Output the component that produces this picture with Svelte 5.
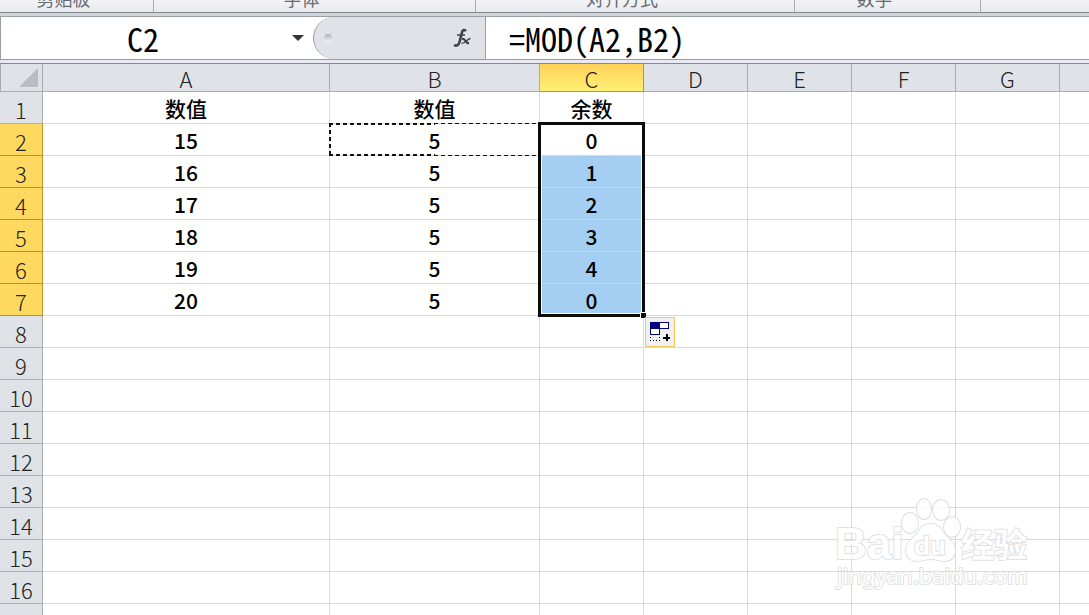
<script lang="ts">
  type Column = { name: string; width: string };

  const groups = [
    { label: '剪贴板', size: 'small' },
    { label: '字体', size: 'large' },
    { label: '对齐方式', size: 'wide' },
    { label: '数字', size: 'medium' },
    { label: '', size: 'rest' },
  ];

  const columns: Column[] = [
    { name: 'A', width: '287px' },
    { name: 'B', width: '210px' },
    { name: 'C', width: '104px' },
    { name: 'D', width: '104px' },
    { name: 'E', width: '104px' },
    { name: 'F', width: '104px' },
    { name: 'G', width: '104px' },
    { name: '', width: 'auto' },
  ];

  const data = [
    ['数值', '数值', '余数'],
    ['15', '5', '0'],
    ['16', '5', '1'],
    ['17', '5', '2'],
    ['18', '5', '3'],
    ['19', '5', '4'],
    ['20', '5', '0'],
  ];

  const rows = Array.from({ length: 16 }, (_, i) => i + 1);

  let cellName = $state('C2');
  let formula = $state('=MOD(A2,B2)');

  function inSelection(row: number) {
    return row >= 2 && row <= 7;
  }
</script>

<div class="app">
  <div class="ribbon">
    {#each groups as group}
      <div class="group {group.size}">{group.label}</div>
    {/each}
  </div>

  <div class="formula-bar">
    <div class="name-box">
      <input class="name-input" aria-label="Name box" bind:value={cellName} />
      <button class="drop" aria-label="Show names">
        <svg width="12" height="6" viewBox="0 0 12 6"><path d="M0 0h12L6 6z" fill="#333" /></svg>
      </button>
    </div>
    <div class="functions">
      <span class="grip"></span>
      <button class="fx" aria-label="Insert function">
        <svg width="20" height="22" viewBox="0 0 20 22" fill="none" stroke="#3f4246">
          <path d="M14 4C12 2 10.500 3 9.800 6L7.500 15C6.800 18 4.500 19.500 2 18" stroke-width="2.600" />
          <path d="M5 8h8" stroke-width="1.500" />
          <path d="M10 12c4-1 3 5 7 4" stroke-width="2.400" />
          <path d="M18.500 11.500c-3 0-5 5-9 5" stroke-width="1.300" />
        </svg>
      </button>
    </div>
    <input class="formula" aria-label="Formula bar" bind:value={formula} />
  </div>

  <div class="sheet">
    <table>
      <colgroup>
        <col style:width="43px" />
        {#each columns as column}
          <col style:width={column.width} />
        {/each}
      </colgroup>
      <thead>
        <tr>
          <th class="corner" aria-label="Select all">
            <svg width="20" height="20" viewBox="0 0 20 20"><path d="M19 0v19H0z" fill="#b9bdc1" /></svg>
          </th>
          {#each columns as column}
            <th scope="col" class:active={column.name === 'C'}>{column.name}</th>
          {/each}
        </tr>
      </thead>
      <tbody>
        {#each rows as row}
          <tr>
            <th scope="row" class:active={inSelection(row)}>{row}</th>
            {#each columns as column, c}
              <td class:filled={column.name === 'C' && row > 2 && row <= 7}>
                {data[row - 1]?.[c] ?? ''}
                {#if column.name === 'B' && row === 2}
                  <span class="ants"></span>
                {/if}
                {#if column.name === 'C' && row === 2}
                  <span class="selection">
                    <span class="handle"></span>
                    <button class="autofill" aria-label="Auto fill options">
                      <svg width="20" height="20" viewBox="0 0 20 20" shape-rendering="crispEdges">
                        <path d="M0 0h19v7h-9v6H0z" fill="#00007f" />
                        <path d="M10 1h8v5h-8zM1 7h8v5H1z" fill="#fff" />
                        <path
                          d="M0 15h1v1H0zM0 18h1v1H0zM3 18h1v1H3zM6 18h1v1H6zM9 18h1v1H9zM9 15h1v1H9zM13 15h7v2h-7zM16 12h2v7h-2z"
                          fill="#000"
                        />
                      </svg>
                    </button>
                  </span>
                {/if}
              </td>
            {/each}
          </tr>
        {/each}
        <tr>
          <th></th>
          {#each columns as _}
            <td></td>
          {/each}
        </tr>
      </tbody>
    </table>
  </div>

  <svg class="watermark" width="200" height="100" viewBox="0 0 200 100">
    <g class="mark">
      <ellipse cx="75" cy="28" rx="8" ry="10" />
      <ellipse cx="89" cy="14" rx="7" ry="10" />
      <ellipse cx="106" cy="15" rx="8" ry="10" />
      <ellipse cx="117" cy="32" rx="8" ry="10" />
      <path d="M96 29c-6 0-10 3-13 8-4 6-12 10-12 18 0 7 5 11 11 11 5 0 9-2 14-2s9 2 13 2c7 0 11-4 11-11 0-8-8-12-12-18-3-5-6-8-12-8z" />
      <text x="0" y="64" class="bai">Bai</text>
      <text x="79" y="60" class="du">du</text>
      <text x="126" y="62" class="jingyan">经验</text>
      <text x="2" y="89" class="url">jingyan.baidu.com</text>
    </g>
  </svg>
</div>

<style>
  :global(body) {
    margin: 0;
    overflow: hidden;
  }

  .app {
    position: relative;
    display: flex;
    flex-direction: column;
    height: 100vh;
    overflow: hidden;
    background: #fff;
    font-family: 'Noto Sans CJK SC', 'Noto Sans', sans-serif;
  }

  button {
    display: flex;
    padding: 0;
    border: 0;
    background: none;
  }

  input {
    box-sizing: border-box;
    min-width: 0;
    padding: 0;
    border: 0;
    outline: 0;
    background: transparent;
    color: #000;
    font-family: 'Noto Sans Mono CJK SC', 'Noto Sans CJK SC', sans-serif;
    font-size: 32px;
    line-height: 40px;
  }

  .ribbon {
    display: flex;
    flex: none;
    height: 12px;
    overflow: hidden;
    border-bottom: 1px solid #868b91;
    background: linear-gradient(#f3f4f6, #e7e9ed);
  }

  .group {
    display: flex;
    box-sizing: border-box;
    flex: none;
    align-items: flex-end;
    justify-content: center;
    padding: 0 26px 2px 0;
    border-right: 1px solid #a9adb3;
    color: #666b73;
    font-size: 18px;
    line-height: 24px;
  }

  .small {
    width: 154px;
  }

  .large {
    width: 322px;
  }

  .wide {
    width: 319px;
  }

  .medium {
    width: 186px;
  }

  .rest {
    flex: 1;
    border-right: 0;
  }

  .formula-bar {
    display: flex;
    flex: none;
    height: 42px;
    margin: 3px 0;
    border-top: 1px solid #9a9fa6;
    border-bottom: 1px solid #999da3;
    box-shadow: 0 -3px #d0d4da, 0 3px #e8e9f5;
  }

  .name-box {
    display: flex;
    flex: none;
    align-items: center;
    box-sizing: border-box;
    width: 313px;
    padding-right: 8px;
    border-left: 1px solid #9a9fa6;
  }

  .name-input {
    flex: 1;
    padding-right: 6px;
    text-align: center;
  }

  .drop {
    width: 14px;
    justify-content: center;
  }

  .functions {
    display: flex;
    flex: none;
    align-items: center;
    justify-content: space-between;
    box-sizing: border-box;
    width: 173px;
    padding: 0 13px 0 10px;
    border: 1px solid #9a9fa6;
    border-width: 0 1px 0 1px;
    border-radius: 22px 0 0 22px;
    background: #dfe2e7;
  }

  .grip {
    width: 8px;
    height: 8px;
    border-radius: 4px;
    background: linear-gradient(#adb1b6, #f4f5f7);
  }

  .formula {
    flex: 1;
    padding-left: 23px;
  }

  .sheet {
    flex: none;
    border-top: 1px solid #85898e;
  }

  table {
    width: 100%;
    border-collapse: separate;
    border-spacing: 0;
    table-layout: fixed;
  }

  th,
  td {
    box-sizing: border-box;
    height: 32px;
    padding: 0;
    text-align: center;
    line-height: 24px;
  }

  th {
    border-right: 1px solid #a8adb3;
    border-bottom: 1px solid #a8adb3;
    background: #dfe2e7;
    color: #222;
    font-size: 22px;
    font-weight: 300;
  }

  thead th {
    height: 28px;
  }

  tbody th {
    padding-top: 3px;
  }

  thead .active {
    border-color: #c48e2c;
    background: linear-gradient(#ffd25a, #ffef75);
  }

  tbody .active {
    border-color: #c48e2c;
    background: #ffd95f;
  }

  .corner {
    border-left: 1px solid #a8adb3;
    text-align: right;
  }

  .corner svg {
    display: block;
    margin: 0 3px 0 auto;
  }

  td {
    position: relative;
    border-right: 1px solid #d9dadb;
    border-bottom: 1px solid #d9dadb;
    color: #000;
    font-size: 21px;
    font-weight: 500;
  }

  th:last-child,
  td:last-child {
    border-right: 0;
  }

  .filled {
    border-bottom-color: #c3d5e6;
    background: #a4cff2;
  }

  .ants {
    position: absolute;
    inset: -1px 0 -1px -1px;
    background:
      repeating-linear-gradient(90deg, #111 0 4px, transparent 4px 7px) top / 100% 1px no-repeat,
      repeating-linear-gradient(90deg, #111 0 4px, transparent 4px 7px) bottom / 100% 1px no-repeat,
      repeating-linear-gradient(90deg, #111 0 4px, transparent 4px 7px) 0 1px / 106px 1px no-repeat,
      repeating-linear-gradient(90deg, #111 0 4px, transparent 4px 7px) 0 calc(100% - 1px) / 106px 1px no-repeat,
      repeating-linear-gradient(#111 0 4px, transparent 4px 7px) left / 2px 100% no-repeat;
  }

  .selection {
    position: absolute;
    z-index: 1;
    top: -2px;
    left: -2px;
    box-sizing: border-box;
    width: 107px;
    height: 195px;
    border: 3px solid #0b0b0b;
    box-shadow: inset 0 0 0 1px #fff;
  }

  .handle {
    position: absolute;
    right: -4px;
    bottom: -4px;
    width: 5px;
    height: 5px;
    border-top: 1px solid #fff;
    border-left: 1px solid #fff;
    background: #0b0b0b;
  }

  .autofill {
    position: absolute;
    top: 192px;
    left: 104px;
    box-sizing: border-box;
    width: 30px;
    height: 30px;
    padding: 4px;
    border: 1px solid #f0cb58;
    background: #f0f0f0;
  }

  .watermark {
    position: absolute;
    right: 54px;
    bottom: 20px;
  }

  .mark {
    fill: #fff;
    stroke: #dcdcdc;
    stroke-width: 2px;
    paint-order: stroke;
    opacity: 0.85;
  }

  .bai,
  .du {
    font-family: 'Liberation Sans', sans-serif;
    font-weight: 700;
  }

  .bai {
    font-size: 44px;
  }

  .du {
    font-size: 26px;
  }

  .jingyan {
    font-size: 33px;
    font-weight: 700;
  }

  .url {
    font-family: 'Noto Sans', sans-serif;
    font-size: 22px;
  }
</style>
